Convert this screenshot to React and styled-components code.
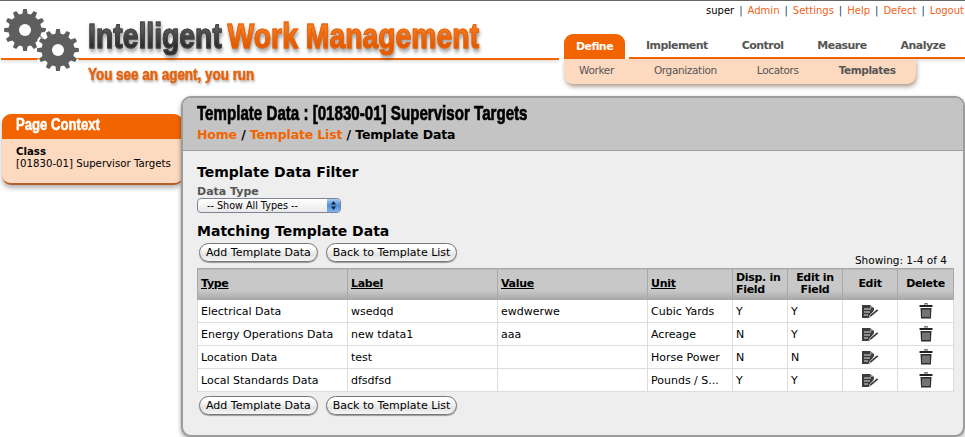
import React from 'react';
import styled, { createGlobalStyle } from 'styled-components';

const ORANGE = '#f26400';
const PEACH = '#fdd9c0';
const DISPLAY_FONT = '"Liberation Sans", Arial, sans-serif';

const GlobalStyle = createGlobalStyle`
    html, body { margin: 0; padding: 0; background: #fff; }
    body {
        font-family: "DejaVu Sans", Verdana, sans-serif;
        font-size: 11px;
        color: #000;
        overflow: hidden;
    }
`

const Page = styled.div`
    width: 965px;
    height: 437px;
    border-top: 1px solid #666;
    box-sizing: border-box;
    overflow: hidden;
`

const Header = styled.header`
    display: flex;
    height: 95px;
`

const Brand = styled.div`
    position: relative;
    width: 558px;
    margin-left: 1px;
`

const BrandBar = styled.div`
    height: 59px;
    box-sizing: border-box;
    border-bottom: 2px solid ${ORANGE};
    box-shadow: 0 2px 3px rgba(0, 0, 0, 0.12);
    clip-path: inset(0 0 -6px 0);
    padding: 16px 0 0 87px;
    white-space: nowrap;
`

const GearMark = styled.svg`
    position: absolute;
    left: 2px;
    top: 7px;
`

const Logo = styled.div`
    display: flex;
    gap: 7px;
    font-family: ${DISPLAY_FONT};
    font-weight: 700;
    font-size: 35px;
    line-height: 38px;
    transform: scaleX(0.81);
    transform-origin: left top;
    filter: drop-shadow(1px 3px 2px rgba(0, 0, 0, 0.4));
`

const LogoWord = styled.span`
    background: linear-gradient(${p => p.$top} 30%, ${p => p.$bottom} 75%);
    -webkit-background-clip: text;
    background-clip: text;
    -webkit-text-fill-color: transparent;
    -webkit-text-stroke: 1.1px ${p => p.$stroke};
`

const Tagline = styled.div`
    margin: 6px 0 0 87px;
    width: max-content;
    font-family: ${DISPLAY_FONT};
    font-weight: 700;
    font-size: 16px;
    line-height: 18px;
    color: #e8610a;
    -webkit-text-stroke: 0.5px currentColor;
    transform: scaleX(0.84);
    transform-origin: left top;
    filter: drop-shadow(1px 2px 1px rgba(0, 0, 0, 0.3));
`

const NavColumn = styled.div`
    flex: 1;
    min-width: 0;
`

const UtilityBar = styled.div`
    display: flex;
    justify-content: flex-end;
    height: 33px;
    padding: 3px 1px 0 0;
    box-sizing: border-box;
    font-size: 10px;
    line-height: 14px;
    color: #123c7a;
`

const UtilityLink = styled.a`
    color: ${p => (p.$plain ? '#000' : '#f0621a')};
`

const Separator = styled.span`
    margin: 0 5px;
`

const TabRow = styled.nav`
    display: flex;
    height: 25px;
    margin-left: 5px;
    letter-spacing: -0.55px;
`

const ActiveTab = styled.a`
    width: 61px;
    box-sizing: border-box;
    padding-top: 6px;
    text-align: center;
    font-weight: 700;
    color: #fff;
    background: ${ORANGE};
    border-radius: 9px 9px 0 0;
`

const TabStrip = styled.div`
    flex: 1;
    display: flex;
    gap: 34px;
    margin-left: 4px;
    padding: 5px 0 0 17px;
    box-sizing: border-box;
    border-bottom: 2px solid ${ORANGE};
    box-shadow: 0 2px 3px rgba(0, 0, 0, 0.12);
    clip-path: inset(0 0 -6px 0);
`

const Tab = styled.a`
    font-weight: 700;
    color: #555;
`

const SubNav = styled.div`
    position: relative;
    display: flex;
    gap: 40px;
    width: 352px;
    height: 25px;
    margin-left: 5px;
    padding: 5px 0 0 15px;
    box-sizing: border-box;
    background: ${PEACH};
    border-radius: 0 0 9px 9px;
    box-shadow: 1px 3px 4px rgba(120, 90, 70, 0.55);
    font-size: 10.5px;
    letter-spacing: -0.35px;
`

const SubLink = styled.a`
    color: #555;
    font-weight: ${p => (p.$current ? 700 : 400)};
    letter-spacing: ${p => (p.$current ? '-0.4px' : 'inherit')};
`

const Main = styled.main`
    display: flex;
    align-items: flex-start;
`

const Sidebar = styled.aside`
    width: 181px;
    flex: none;
    margin: 18px 0 0 2px;
    border-radius: 9px;
    background: ${PEACH};
    overflow: hidden;
    border-bottom: 2px solid #b5602a;
    box-shadow: 0 3px 5px rgba(0, 0, 0, 0.3);
`

const SidebarTitle = styled.div`
    height: 25px;
    padding-left: 14px;
    background: ${ORANGE};
    color: #fff;
    font-family: ${DISPLAY_FONT};
    font-weight: 700;
    font-size: 16px;
    line-height: 21px;
    -webkit-text-stroke: 0.5px currentColor;
`

const SidebarTitleText = styled.div`
    width: max-content;
    transform: scaleX(0.82);
    transform-origin: left top;
`

const SidebarBody = styled.div`
    height: 44px;
    padding: 7px 0 0 14px;
    box-sizing: border-box;
    font-size: 10.2px;
    line-height: 12px;
    white-space: nowrap;
`

const ClassLabel = styled.div`
    font-weight: 700;
`

const Panel = styled.section`
    flex: 1;
    min-width: 0;
    height: 341px;
    margin-left: -2px;
    box-sizing: border-box;
    position: relative;
    border: 2px solid #9c9c9c;
    border-radius: 10px;
    background: #eee;
    overflow: hidden;
    box-shadow: 0 2px 4px rgba(0, 0, 0, 0.4);
`

const PanelHead = styled.div`
    height: 53px;
    box-sizing: border-box;
    padding: 3px 0 0 14px;
    background: #c4c4c4;
    border-bottom: 1px solid #a0a0a0;
`

const PanelTitle = styled.h1`
    margin: 0;
    width: max-content;
    font-family: ${DISPLAY_FONT};
    font-weight: 700;
    font-size: 21px;
    line-height: 24px;
    white-space: nowrap;
    -webkit-text-stroke: 0.7px currentColor;
    transform: scaleX(0.72);
    transform-origin: left top;
`

const Breadcrumbs = styled.div`
    margin-top: 2px;
    font-size: 12.5px;
    font-weight: 700;
    letter-spacing: -0.15px;
    line-height: 16px;
`

const Crumb = styled.a`
    color: ${ORANGE};
`

const PanelBody = styled.div`
    padding: 12px 11px 0 14px;
`

const SectionHeading = styled.h2`
    margin: 0;
    font-size: 14px;
    font-weight: 700;
    line-height: 18px;
`

const FieldLabel = styled.div`
    margin-top: 4px;
    font-weight: 700;
    line-height: 13px;
    color: #555;
`

const SelectBox = styled.div`
    display: flex;
    width: 144px;
    height: 15px;
    box-sizing: border-box;
    border: 1px solid #7d8595;
    border-radius: 4px;
    background: linear-gradient(#fff, #e9e9e9);
    overflow: hidden;
    font-size: 9.6px;
    line-height: 13px;
`

const SelectText = styled.div`
    flex: 1;
    padding-left: 9px;
`

const Stepper = styled.div`
    width: 13px;
    background: linear-gradient(#a9cdf2, #4e8fdc 50%, #7fb4ec);
    display: flex;
    align-items: center;
    justify-content: center;
`

const MatchingHeading = styled(SectionHeading)`
    margin-top: 9px;
`

const ActionRow = styled.div`
    display: flex;
    align-items: flex-end;
    gap: 8px;
    margin: ${p => p.$margin};
    padding-left: 2px;
`

const PillButton = styled.button`
    height: 19px;
    padding: 0 6px;
    font-family: inherit;
    font-size: 11px;
    line-height: 15px;
    color: #000;
    border: 1px solid #777;
    border-radius: 10px;
    background: linear-gradient(#fff 20%, #e4e4e4 65%, #f5f5f5);
    box-shadow: 0 1px 1px rgba(0, 0, 0, 0.35);
`

const Showing = styled.div`
    margin: 0 0 -5px auto;
    padding-right: 5px;
    font-size: 10.5px;
    line-height: 13px;
`

const DataTable = styled.table`
    width: 756px;
    margin-top: 6px;
    border-collapse: collapse;
    table-layout: fixed;
    background: #fff;
`

const HeadCell = styled.th`
    height: 31px;
    padding: 0 3px;
    box-sizing: border-box;
    border: 1px solid #a8a8a8;
    background: linear-gradient(#c8c8c8 70%, #a9a9a9);
    font-weight: 700;
    letter-spacing: -0.3px;
    line-height: 12px;
    white-space: nowrap;
    text-align: ${p => (p.$left ? 'left' : 'center')};
    text-decoration: ${p => (p.$link ? 'underline' : 'none')};
`

const Cell = styled.td`
    height: 23px;
    padding: 0 3px;
    box-sizing: border-box;
    border: 1px solid #ddd;
    white-space: nowrap;
    overflow: hidden;
    text-align: ${p => (p.$center ? 'center' : 'left')};
`

const IconSlot = styled.svg`
    display: block;
    margin: 0 auto;
`

const gearPath = (cx, cy, outer, inner, teeth) => {
    const step = (Math.PI * 2) / teeth;
    let d = '';
    for (let i = 0; i < teeth; i++) {
        const a = i * step;
        const pts = [
            [inner, a - step * 0.3],
            [outer, a - step * 0.17],
            [outer, a + step * 0.17],
            [inner, a + step * 0.3],
        ];
        pts.forEach(([r, t], j) => {
            const x = (cx + r * Math.cos(t)).toFixed(2);
            const y = (cy + r * Math.sin(t)).toFixed(2);
            d += `${i === 0 && j === 0 ? 'M' : 'L'}${x} ${y} `;
        });
    }
    return d + 'Z';
};

const Gears = () => (
    <GearMark width="80" height="66" viewBox="0 0 80 66">
        <path d={gearPath(22, 22, 21, 16.5, 12)} fill="#5e5e5e" />
        <circle cx="22" cy="22" r="6" fill="#fff" />
        <path d={gearPath(55, 42, 23, 18, 12)} fill="#fff" />
        <path d={gearPath(55, 42, 21, 16.5, 12)} fill="#5e5e5e" />
        <circle cx="55" cy="42" r="6" fill="#fff" />
    </GearMark>
);

const EditIcon = () => (
    <IconSlot width="17" height="15" viewBox="0 0 17 15">
        <path d="M0 1h8l4 3v2l-4 6v2H0z" fill="#3c3c3c" />
        <path d="M2 5h7M2 8h6M2 11h4" stroke="#ddd" strokeWidth="1" />
        <path d="M8 1v3h4z" fill="#888" />
        <path d="M8 11l7-6 1.5 1.5-7 6-2.5 1z" fill="#333" stroke="#fff" strokeWidth="0.6" />
    </IconSlot>
);

const TrashIcon = () => (
    <IconSlot width="14" height="16" viewBox="0 0 14 16">
        <path d="M5 1.5C5 .5 9 .5 9 1.5" fill="none" stroke="#222" strokeWidth="1" />
        <rect x="0.5" y="2" width="13" height="2" rx="0.5" fill="#222" />
        <path d="M1.5 5h11l-.6 10.5H2.1z" fill="#2c2c2c" />
        <path d="M4 6.5v7.5M6 6.5v7.5M8 6.5v7.5M10 6.5v7.5" stroke="#ccc" strokeWidth="0.9" />
    </IconSlot>
);

const columns = [
    { label: 'Type', width: 150, link: true },
    { label: 'Label', width: 150, link: true },
    { label: 'Value', width: 150, link: true },
    { label: 'Unit', width: 85, link: true },
    { label: <>Disp. in<br />Field</>, width: 55, left: true },
    { label: <>Edit in<br />Field</>, width: 55 },
    { label: 'Edit', width: 55 },
    { label: 'Delete', width: 56 },
];

const rows = [
    ['Electrical Data', 'wsedqd', 'ewdwerwe', 'Cubic Yards', 'Y', 'Y'],
    ['Energy Operations Data', 'new tdata1', 'aaa', 'Acreage', 'N', 'Y'],
    ['Location Data', 'test', '', 'Horse Power', 'N', 'N'],
    ['Local Standards Data', 'dfsdfsd', '', 'Pounds / S...', 'Y', 'Y'],
];

const Actions = () => (
    <>
        <PillButton>Add Template Data</PillButton>
        <PillButton>Back to Template List</PillButton>
    </>
);

const App = () => (
    <Page>
        <GlobalStyle />
        <Header>
            <Brand>
                <BrandBar>
                    <Logo>
                        <LogoWord $top="#5a5a5a" $bottom="#2e2e2e" $stroke="#444">Intelligent</LogoWord>
                        <LogoWord $top="#f47a20" $bottom="#e05a00" $stroke="#ea6206">Work Management</LogoWord>
                    </Logo>
                </BrandBar>
                <Gears />
                <Tagline>You see an agent, you run</Tagline>
            </Brand>
            <NavColumn>
                <UtilityBar>
                    <UtilityLink $plain>super</UtilityLink>
                    {['Admin', 'Settings', 'Help', 'Defect', 'Logout'].map(name => (
                        <React.Fragment key={name}>
                            <Separator>|</Separator>
                            <UtilityLink>{name}</UtilityLink>
                        </React.Fragment>
                    ))}
                </UtilityBar>
                <TabRow>
                    <ActiveTab>Define</ActiveTab>
                    <TabStrip>
                        <Tab>Implement</Tab>
                        <Tab>Control</Tab>
                        <Tab>Measure</Tab>
                        <Tab>Analyze</Tab>
                    </TabStrip>
                </TabRow>
                <SubNav>
                    <SubLink>Worker</SubLink>
                    <SubLink>Organization</SubLink>
                    <SubLink>Locators</SubLink>
                    <SubLink $current>Templates</SubLink>
                </SubNav>
            </NavColumn>
        </Header>
        <Main>
            <Sidebar>
                <SidebarTitle><SidebarTitleText>Page Context</SidebarTitleText></SidebarTitle>
                <SidebarBody>
                    <ClassLabel>Class</ClassLabel>
                    <div>[01830-01] Supervisor Targets</div>
                </SidebarBody>
            </Sidebar>
            <Panel>
                <PanelHead>
                    <PanelTitle>Template Data : [01830-01] Supervisor Targets</PanelTitle>
                    <Breadcrumbs>
                        <Crumb>Home</Crumb> / <Crumb>Template List</Crumb> / Template Data
                    </Breadcrumbs>
                </PanelHead>
                <PanelBody>
                    <SectionHeading>Template Data Filter</SectionHeading>
                    <FieldLabel>Data Type</FieldLabel>
                    <SelectBox>
                        <SelectText>-- Show All Types --</SelectText>
                        <Stepper>
                            <svg width="7" height="11" viewBox="0 0 7 11">
                                <path d="M3.5 1L6 4.5H1zM3.5 10L1 6.5h5z" fill="#123" />
                            </svg>
                        </Stepper>
                    </SelectBox>
                    <MatchingHeading>Matching Template Data</MatchingHeading>
                    <ActionRow $margin="3px 0 0">
                        <Actions />
                        <Showing>Showing: 1-4 of 4</Showing>
                    </ActionRow>
                    <DataTable>
                        <colgroup>
                            {columns.map((col, i) => <col key={i} width={col.width} />)}
                        </colgroup>
                        <thead>
                            <tr>
                                {columns.map((col, i) => (
                                    <HeadCell key={i} $left={col.link || col.left} $link={col.link}>{col.label}</HeadCell>
                                ))}
                            </tr>
                        </thead>
                        <tbody>
                            {rows.map(row => (
                                <tr key={row[0]}>
                                    {row.map((value, i) => <Cell key={i}>{value}</Cell>)}
                                    <Cell $center><EditIcon /></Cell>
                                    <Cell $center><TrashIcon /></Cell>
                                </tr>
                            ))}
                        </tbody>
                    </DataTable>
                    <ActionRow $margin="4px 0 0">
                        <Actions />
                    </ActionRow>
                </PanelBody>
            </Panel>
        </Main>
    </Page>
);

export default App;
